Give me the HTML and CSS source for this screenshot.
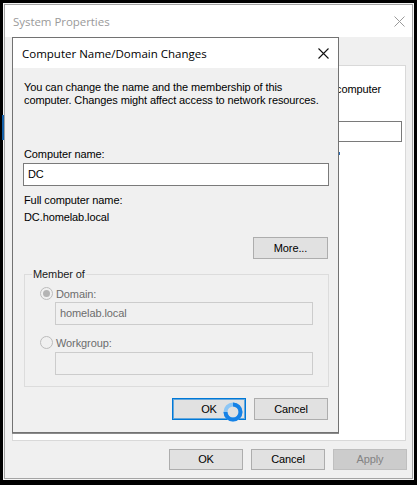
FILE: index.html
```html
<!DOCTYPE html>
<html>
<head>
<meta charset="utf-8">
<link rel="stylesheet" href="styles.css">
</head>
<body>
<div class="screen">
  <div class="window">
    <div class="frame">
      <div class="titlebar">
        <span class="title">System Properties</span>
        <svg class="close close-inactive" width="11" height="11" viewBox="0 0 11 11"><path d="M0.5 0.5L10.5 10.5M10.5 0.5L0.5 10.5" stroke="#9a9a9a" stroke-width="1"/></svg>
      </div>
      <div class="tabstrip"></div>
      <div class="tabpage">
        <div class="tp-line">computer</div>
        <div class="tp-field"></div>
        <div class="tp-dot"></div>
        <button class="btn btn-focus tp-change">Change...</button>
      </div>
      <div class="footer">
        <button class="btn">OK</button>
        <button class="btn">Cancel</button>
        <button class="btn btn-disabled">Apply</button>
      </div>
    </div>
  </div>

  <div class="dialog">
    <div class="dlg-title">
      <span class="dlg-title-text">Computer Name/Domain Changes</span>
      <svg class="close" width="11" height="11" viewBox="0 0 11 11"><path d="M0.5 0.5L10.5 10.5M10.5 0.5L0.5 10.5" stroke="#111" stroke-width="1.1"/></svg>
    </div>
    <div class="dlg-body">
      <p class="intro">You can change the name and the membership of this<br>computer. Changes might affect access to network resources.</p>
      <div class="lbl lbl-name">Computer name:</div>
      <div class="textbox"><span class="tb-text">DC</span></div>
      <div class="lbl lbl-full">Full computer name:</div>
      <div class="lbl lbl-fullval">DC.homelab.local</div>
      <button class="btn btn-more">More...</button>
      <fieldset class="group">
        <legend>Member of</legend>
        <div class="radio-row row-domain">
          <span class="radio checked"></span><span class="radio-label">Domain:</span>
        </div>
        <div class="textbox disabled"><span class="tb-text">homelab.local</span></div>
        <div class="radio-row row-work">
          <span class="radio"></span><span class="radio-label">Workgroup:</span>
        </div>
        <div class="textbox disabled tb-work"></div>
      </fieldset>
      <div class="dlg-buttons">
        <button class="btn btn-focus">OK</button>
        <button class="btn">Cancel</button>
      </div>
    </div>
  </div>

  <div class="edge-mark"></div>
  <svg class="spinner" width="22" height="22" viewBox="0 0 22 22">
    <circle cx="11" cy="11" r="7.5" fill="none" stroke="#8cc6f5" stroke-width="4"/>
    <path d="M11 3.5 A7.5 7.5 0 1 1 3.5 11" fill="none" stroke="#1682e6" stroke-width="4"/>
  </svg>
</div>
</body>
</html>
```

FILE: styles.css
```css
* { box-sizing: border-box; }
html, body { margin: 0; padding: 0; }
body {
  background: #000;
  width: 417px;
  height: 485px;
  overflow: hidden;
  font-family: "Liberation Sans", Arial, sans-serif;
  font-size: 11px;
  letter-spacing: -0.1px;
  color: #000;
}
.screen {
  position: relative;
  width: 417px;
  height: 485px;
  padding: 3px 0 0 3px;
}
.window {
  width: 411px;
  height: 477px;
  border: 1px solid #f4f4f4;
  background: #f0f0f0;
}
.frame {
  width: 409px;
  height: 475px;
  border: 1px solid #a4a4a4;
  background: #f0f0f0;
  display: flex;
  flex-direction: column;
}
.titlebar {
  height: 32px;
  background: #fff;
  display: flex;
  align-items: center;
  justify-content: space-between;
  padding: 0 7px 0 8px;
}
.title {
  font-family: "Open Sans", "Noto Sans", sans-serif;
  font-size: 11.5px;
  letter-spacing: -0.05px;
  color: #9a9a9a;
}
.close { display: block; }
.tabstrip { height: 28px; }
.tabpage {
  margin: 0 6px 0 7px;
  height: 376px;
  background: #fff;
  border: 1px solid #d9d9d9;
  display: flex;
  flex-direction: column;
  align-items: flex-start;
}
.tp-line {
  margin-top: 17px;
  padding-left: 323px;
  line-height: 13px;
}
.tp-field {
  margin: 25px 0 0 120px;
  width: 269px;
  height: 21px;
  border: 1px solid #7a7a7a;
  background: #fff;
}
.tp-dot {
  margin: 10px 0 0 326px;
  width: 1px;
  height: 3px;
  background: #2d6fb8;
}
.tp-change {
  margin: 87px 0 0 298px;
  width: 76px;
  height: 21px;
}
.footer {
  margin-top: 8px;
  display: flex;
  justify-content: flex-end;
  gap: 8px;
  padding-right: 5px;
}
.footer .btn { width: 74px; height: 21px; }

.btn {
  font-family: "Liberation Sans", Arial, sans-serif;
  font-size: 11px;
  letter-spacing: -0.1px;
  color: #000;
  background: #e1e1e1;
  border: 1px solid #adadad;
  padding: 0;
  margin: 0;
  line-height: 1;
}
.btn-focus {
  border-color: #0078d7;
  box-shadow: inset 0 0 0 1px rgba(0, 120, 215, 0.55);
}
.btn-disabled {
  background: #cccccc;
  border-color: #bfbfbf;
  color: #838383;
}

.dialog {
  position: absolute;
  left: 12px;
  top: 37px;
  width: 327px;
  height: 396px;
  border: 1px solid #727272;
  background: #f0f0f0;
  box-shadow: 0 1px 0 #8a8a8a;
  display: flex;
  flex-direction: column;
}
.dlg-title {
  height: 30px;
  background: #fff;
  display: flex;
  align-items: center;
  justify-content: space-between;
  padding: 0 9px 0 9px;
}
.dlg-title-text {
  font-family: "Open Sans", "Noto Sans", sans-serif;
  font-size: 11.5px;
  letter-spacing: 0;
  color: #000;
}
.dlg-body {
  padding: 0 9px 0 11px;
  display: flex;
  flex-direction: column;
  align-items: flex-start;
}
.intro {
  margin: 13px 0 0 0;
  line-height: 13px;
}
.lbl { line-height: 13px; }
.lbl-name { margin-top: 41px; }
.textbox {
  margin: 2px 0 0 -1px;
  width: 306px;
  height: 23px;
  border: 1px solid #7a7a7a;
  background: #fff;
  display: flex;
  align-items: center;
  padding-left: 4px;
}
.tb-text { line-height: 13px; }
.lbl-full { margin-top: 8px; }
.lbl-fullval { margin-top: 4px; }
.btn-more {
  margin-top: 13px;
  align-self: flex-end;
  margin-right: 1px;
  width: 75px;
  height: 22px;
}
.group {
  margin: 9px 0 0 0;
  padding: 0 8px 11px 8px;
  width: 305px;
  border: 1px solid #dcdcdc;
  min-width: 0;
}
.group legend {
  padding: 0 1px;
  margin-left: -1px;
  line-height: 13px;
  color: #1a1a1a;
}
.radio-row {
  display: flex;
  align-items: center;
  height: 13px;
  margin-left: 7px;
  gap: 3px;
  color: #6d6d6d;
}
.row-domain { margin-top: 6px; }
.row-work { margin-top: 11px; }
.radio {
  width: 13px;
  height: 13px;
  border-radius: 50%;
  border: 1px solid #bcbcbc;
  background: #f0f0f0;
  display: flex;
  align-items: center;
  justify-content: center;
}
.radio.checked::after {
  content: "";
  width: 7px;
  height: 7px;
  border-radius: 50%;
  background: #b4b4b4;
}
.textbox.disabled {
  margin: 2px 0 0 22px;
  width: 258px;
  border-color: #cccccc;
  background: #f0f0f0;
  color: #6d6d6d;
}
.textbox.tb-work { margin-top: 3px; }
.dlg-buttons {
  margin-top: 11px;
  align-self: flex-end;
  margin-right: 1px;
  display: flex;
  gap: 8px;
}
.dlg-buttons .btn { width: 74px; height: 22px; }

.edge-mark {
  position: absolute;
  left: 2px;
  top: 115px;
  width: 2px;
  height: 25px;
  background: #1560a8;
}
.spinner {
  position: absolute;
  left: 222px;
  top: 401px;
}
```
